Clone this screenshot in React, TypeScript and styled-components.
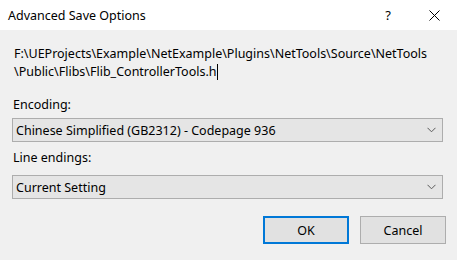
import React from 'react';
import styled, { createGlobalStyle } from 'styled-components';

const Global = createGlobalStyle`
    html, body {
        margin: 0;
        padding: 0;
        background: #f0f0f0;
        font-family: "Noto Sans", "Noto Sans CJK SC", sans-serif;
        font-size: 12.5px;
        color: #000;
    }
`;

const Dialog = styled.div`
    width: 457px;
    height: 260px;
    display: flex;
    flex-direction: column;
    background: #f0f0f0;
    overflow: hidden;
`;

const TitleBar = styled.div`
    height: 30px;
    background: #fff;
    display: flex;
    align-items: center;
    padding-left: 8px;
`;

const Title = styled.div`
    flex: 1;
`;

const TitleButton = styled.div`
    width: 46px;
    height: 30px;
    display: flex;
    align-items: center;
    justify-content: center;
    font-size: 13px;
`;

const Body = styled.div`
    display: flex;
    flex-direction: column;
    padding: 15px 14px 0 12px;
`;

const PathText = styled.div`
    padding-left: 2px;
    line-height: 18px;
    height: 36px;
    white-space: nowrap;
`;

const Caret = styled.span`
    display: inline-block;
    width: 1px;
    height: 16px;
    background: #000;
    vertical-align: -4px;
`;

const Label = styled.div<{ top: number }>`
    margin-top: ${p => p.top}px;
    line-height: 18px;
    padding-left: 1px;
`;

const Combo = styled.div<{ top: number }>`
    margin-top: ${p => p.top}px;
    height: 24px;
    box-sizing: border-box;
    border: 1px solid #adadad;
    background: #e5e5e5;
    display: flex;
    align-items: center;
    padding: 0 6px 0 3px;
`;

const ComboText = styled.div`
    flex: 1;
`;

const Buttons = styled.div`
    display: flex;
    justify-content: flex-end;
    gap: 11px;
    margin-top: 17px;
    margin-right: -3px;
`;

const Button = styled.div<{ primary?: boolean }>`
    width: 86px;
    height: 28px;
    box-sizing: border-box;
    border: ${p => (p.primary ? '2px solid #0078d7' : '1px solid #adadad')};
    background: #e1e1e1;
    display: flex;
    align-items: center;
    justify-content: center;
`;

const Chevron = () => (
    <svg width="9" height="6" viewBox="0 0 9 6">
        <path d="M0.5 0.8 L4.5 4.8 L8.5 0.8" fill="none" stroke="#5a5a5a" strokeWidth="1" />
    </svg>
);

const CloseIcon = () => (
    <svg width="11" height="11" viewBox="0 0 11 11">
        <path d="M0.5 0.5 L10.5 10.5 M10.5 0.5 L0.5 10.5" stroke="#000" strokeWidth="1" />
    </svg>
);

function App(): JSX.Element {
    return (
        <Dialog>
            <Global />
            <TitleBar>
                <Title>Advanced Save Options</Title>
                <TitleButton>?</TitleButton>
                <TitleButton><CloseIcon /></TitleButton>
            </TitleBar>
            <Body>
                <PathText>
                    F:\UEProjects\Example\NetExample\Plugins\NetTools\Source\NetTools
                    <br />
                    \Public\Flibs\Flib_ControllerTools.h<Caret />
                </PathText>
                <Label top={15}>Encoding:</Label>
                <Combo top={4}>
                    <ComboText>Chinese Simplified (GB2312) - Codepage 936</ComboText>
                    <Chevron />
                </Combo>
                <Label top={7}>Line endings:</Label>
                <Combo top={8}>
                    <ComboText>Current Setting</ComboText>
                    <Chevron />
                </Combo>
                <Buttons>
                    <Button primary>OK</Button>
                    <Button>Cancel</Button>
                </Buttons>
            </Body>
        </Dialog>
    );
}

export default App;
